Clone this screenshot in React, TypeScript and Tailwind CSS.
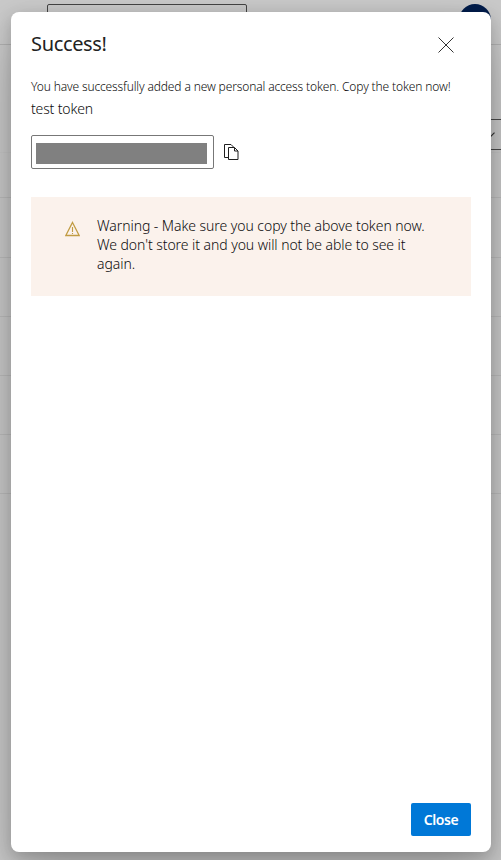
function PageBehind() {
  return (
    <div className="flex h-full flex-col overflow-hidden bg-[#cacaca]">
      <header className="flex h-[45px] shrink-0 items-start justify-between border-b border-[#b2b2b2] pt-1 pr-[10px] pl-[47px]">
        <div className="h-8 w-[200px] rounded-[2px] border border-[#444444]" />
        <div className="h-8 w-8 rounded-full bg-[#001c4b]" />
      </header>
      <div className="flex h-[108px] shrink-0 items-end justify-end border-b border-[#c6c6c6] pb-[2px]">
        <div className="flex h-[31px] w-24 items-center justify-end border-y border-[#4c4c4c] pr-[6px]">
          <svg width="9" height="6" viewBox="0 0 9 6" fill="none" stroke="#333" strokeWidth="1.2">
            <path d="M.5.7 4.5 4.7 8.5.7" />
          </svg>
        </div>
      </div>
      <div className="h-[45px] shrink-0 border-b border-[#bcbcbc]" />
      <div className="h-[60px] shrink-0 border-b border-[#bcbcbc]" />
      <div className="h-[59px] shrink-0 border-b border-[#bcbcbc]" />
      <div className="h-[59px] shrink-0 border-b border-[#bcbcbc]" />
      <div className="h-[59px] shrink-0 border-b border-[#bcbcbc]" />
      <div className="h-[59px] shrink-0 border-b border-[#bcbcbc]" />
    </div>
  );
}

function CopyIcon() {
  return (
    <svg width="15" height="17" viewBox="0 0 15 17" fill="none" stroke="#1f1f1f" strokeWidth="1">
      <path d="M4 13.500H.5V.5h6.500l2.500 2.500" />
      <path d="M4.500 3.500h6l3.500 3.500v8.500H4.500zM10.500 3.500V7H14" />
    </svg>
  );
}

function WarningIcon() {
  return (
    <svg className="mt-6 shrink-0" width="15" height="16" viewBox="0 0 15 16" fill="none" stroke="#c19c43">
      <path d="M7.500 1.500 14.200 14.500H.8z" strokeWidth="1.3" />
      <path d="M7.500 6v5M7.500 12v1" strokeWidth="1.1" />
    </svg>
  );
}

export default function App() {
  return (
    <div className="relative h-[860px] w-[501px] overflow-hidden font-['Noto_Sans','Open_Sans',sans-serif] text-[#0c0c0c]">
      <PageBehind />
      <div className="absolute inset-0 flex pt-3 pr-[10px] pb-2 pl-[11px]">
        <section className="flex w-[480px] flex-col rounded-[8px] bg-white px-5 shadow-[0_25.6px_57.6px_rgba(0,0,0,0.22),0_4.8px_14.4px_rgba(0,0,0,0.18)]">
          <div className="flex h-[64px] items-start justify-between pt-[18px] pr-4">
            <h1 className="text-[20px] leading-7 tracking-[-0.35px] whitespace-nowrap text-[#222222]">Success!</h1>
            <svg className="mt-[6px]" width="18" height="18" viewBox="0 0 18 18" stroke="#333" strokeWidth="1">
              <path d="M1.500 1.500 16.500 16.500M16.500 1.500 1.500 16.500" />
            </svg>
          </div>
          <p className="h-[22px] text-[12px] leading-[22px] font-light tracking-[-0.135px] whitespace-nowrap">
            You have successfully added a new personal access token. Copy the token now!
          </p>
          <p className="h-[25px] text-[14px] leading-[22px] font-light tracking-[-0.15px] whitespace-nowrap">
            test token
          </p>
          <div className="mt-3 flex h-[34px] items-center gap-[10px]">
            <div className="flex h-[34px] w-[183px] items-center rounded-[2px] border border-[#777777] px-[4px]">
              <div className="mt-[2px] h-[21px] w-[171px] bg-[#808080]" />
            </div>
            <CopyIcon />
          </div>
          <div className="mt-7 flex h-[99px] shrink-0 bg-[#fbf2ec] pl-[34px]">
            <WarningIcon />
            <p className="ml-[17px] pt-[19px] text-[14px] leading-[19px] font-light tracking-[-0.06px] whitespace-nowrap">
              Warning - Make sure you copy the above token now.
              <br />
              We don't store it and you will not be able to see it
              <br />
              again.
            </p>
          </div>
          <button className="mt-auto mb-4 flex h-[33px] w-[60px] items-center justify-center self-end rounded-[2px] bg-[#0078d7] text-[14px] font-semibold tracking-[-0.4px] text-white">
            Close
          </button>
        </section>
      </div>
    </div>
  );
}
